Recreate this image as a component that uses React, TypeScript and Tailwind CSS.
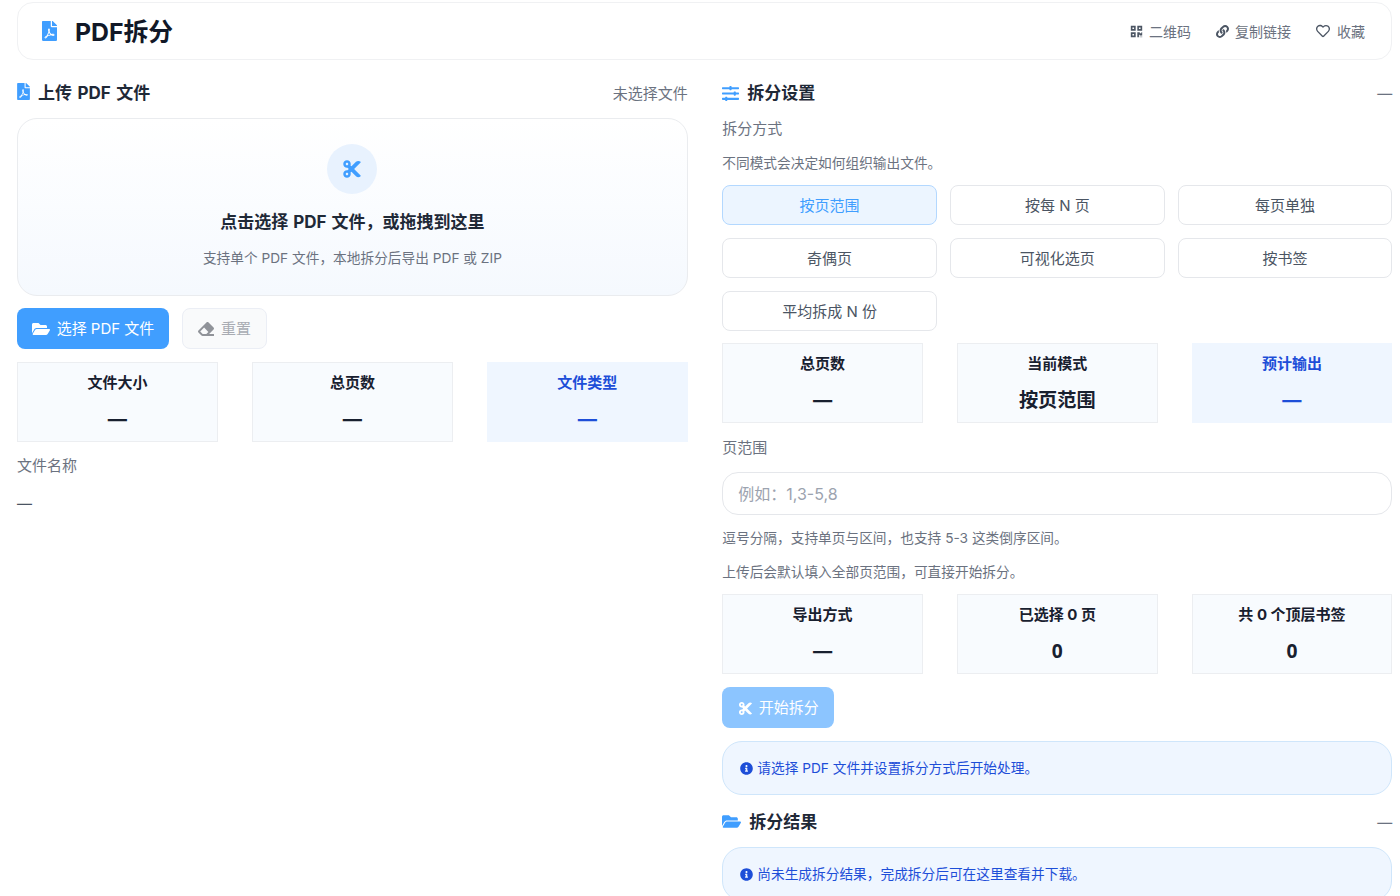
import { FaCut, FaEraser, FaFilePdf, FaFolderOpen, FaInfoCircle, FaLink, FaQrcode, FaRegHeart, FaSlidersH } from 'react-icons/fa';

const MODES = ['按页范围', '按每 N 页', '每页单独', '奇偶页', '可视化选页', '按书签', '平均拆成 N 份'];

function Stat({ label, value, active }: { label: string; value: string; active?: boolean }) {
  return (
    <div className={`h-[80px] border pt-[8px] text-center ${active ? 'border-[#eff6ff] bg-[#eff6ff] text-[#1d4ed8]' : 'border-[#eceef1] bg-[#f8fbfe] text-[#18202f]'}`}>
      <div className="text-[15px] font-bold leading-[24px]">{label}</div>
      <div className={`mt-[9px] text-[19.2px] font-bold leading-[30px] ${value === '0' ? "font-['Noto_Sans']" : ''}`}>{value}</div>
    </div>
  );
}

function SectionTitle({ icon, title, right }: { icon: React.ReactNode; title: string; right: string }) {
  return (
    <div className="flex h-[26px] items-center justify-between">
      <div className="flex items-center text-[17px] font-bold text-[#1f2937] [word-spacing:1.5px]">
        {icon}
        {title}
      </div>
      <span className="text-[15px] text-[#6b7280]">{right}</span>
    </div>
  );
}

function Notice({ text, className }: { text: string; className: string }) {
  return (
    <div className={`flex items-center rounded-[20px] border border-[#cfe6fb] bg-[#eff6ff] px-[17px] text-[13.7px] text-[#1d4ed8] ${className}`}>
      <FaInfoCircle className="mr-[4px] text-[13px] text-[#1d4ed8]" />
      {text}
    </div>
  );
}

export default function App() {
  return (
    <div className="h-[896px] overflow-hidden bg-white pl-[17px] pr-[8px] pt-[2px] font-['Inter','Noto_Sans_CJK_SC',sans-serif]">
      <header className="flex h-[58px] items-center justify-between rounded-[16px] border border-[#f0f1f3] pl-[24px] pr-[26px]">
        <div className="flex items-center">
          <FaFilePdf className="mr-[18px] h-[20px] w-[15px] text-[#409eff]" />
          <h1 className="mt-[4px] text-[24.8px] font-bold text-[#111827]">PDF拆分</h1>
        </div>
        <div className="flex items-center gap-[25px] text-[14px] text-[#6b7280]">
          <span className="flex items-center gap-[6px]"><FaQrcode className="text-[13px] text-[#4b5563]" />二维码</span>
          <span className="flex items-center gap-[6px]"><FaLink className="text-[13px] text-[#4b5563]" />复制链接</span>
          <span className="flex items-center gap-[7px]"><FaRegHeart className="text-[14px] text-[#4b5563]" />收藏</span>
        </div>
      </header>

      <div className="grid grid-cols-[670.8px_670px] gap-x-[34.5px] pt-[21px]">
        <section>
          <SectionTitle icon={<FaFilePdf className="mb-[6px] mr-[8px] h-[17px] w-[13px] text-[#409eff]" />} title="上传 PDF 文件" right="未选择文件" />
          <div className="mt-[11px] flex h-[178px] flex-col items-center rounded-[20px] border border-[#eaecef] bg-gradient-to-b from-white to-[#f5f9fe] pt-[25px]">
            <div className="flex h-[50px] w-[50px] items-center justify-center rounded-full bg-[#e8f2fe]">
              <FaCut className="text-[20px] text-[#409eff]" />
            </div>
            <div className="mt-[15px] text-[17px] font-bold leading-[26px] text-[#1f2937] [word-spacing:1px]">点击选择 PDF 文件，或拖拽到这里</div>
            <div className="mt-[12px] text-[13.7px] leading-[22px] text-[#6b7280]">支持单个 PDF 文件，本地拆分后导出 PDF 或 ZIP</div>
          </div>
          <div className="mt-[12px] flex gap-[13px]">
            <button className="flex h-[41px] w-[152px] items-center justify-center gap-[7px] rounded-[8px] bg-[#409eff] pt-[1px] text-[15px] text-white">
              <FaFolderOpen className="text-[18px]" />选择 PDF 文件
            </button>
            <button className="flex h-[41px] w-[85px] items-center justify-center gap-[7px] rounded-[8px] border border-[#ebeef5] bg-[#f9fafb] pt-[1px] text-[15px] text-[#a8abb2]">
              <FaEraser className="text-[16px] text-[#909399]" />重置
            </button>
          </div>
          <div className="mt-[13px] grid grid-cols-3 gap-x-[34px]">
            <Stat label="文件大小" value="—" />
            <Stat label="总页数" value="—" />
            <Stat label="文件类型" value="—" active />
          </div>
          <div className="mt-[12px] text-[15px] leading-[24px] text-[#6b7280]">文件名称</div>
          <div className="mt-[13px] text-[15px] leading-[26px] text-[#4b5563]">—</div>
        </section>

        <section>
          <SectionTitle icon={<FaSlidersH className="mb-[2px] mr-[8px] text-[17px] text-[#409eff]" />} title="拆分设置" right="—" />
          <div className="mt-[10px] text-[15px] leading-[24px] text-[#6b7280]">拆分方式</div>
          <div className="mt-[11px] text-[13.7px] leading-[22px] text-[#6b7280]">不同模式会决定如何组织输出文件。</div>
          <div className="mt-[11px] grid grid-cols-3 gap-x-[13px] gap-y-[13px]">
            {MODES.map((mode, i) => (
              <button
                key={mode}
                className={`h-[40px] rounded-[8px] border pt-[2px] text-[15px] ${i === 0 ? 'border-[#b3d8ff] bg-[#ecf5ff] text-[#409eff]' : 'border-[#e5e7eb] bg-white text-[#4b5563]'}`}
              >
                {mode}
              </button>
            ))}
          </div>
          <div className="mt-[12px] grid grid-cols-3 gap-x-[34px]">
            <Stat label="总页数" value="—" />
            <Stat label="当前模式" value="按页范围" />
            <Stat label="预计输出" value="—" active />
          </div>
          <div className="mt-[13px] text-[15px] leading-[24px] text-[#6b7280]">页范围</div>
          <input
            placeholder="例如：1,3-5,8"
            className="mt-[12px] block h-[43px] w-full rounded-[16px] border border-[#e5e7eb] bg-white px-[15px] text-[16px] outline-none placeholder:text-[#9ca3af]"
          />
          <div className="mt-[12px] text-[13.7px] leading-[22px] text-[#6b7280]">逗号分隔，支持单页与区间，也支持 5-3 这类倒序区间。</div>
          <div className="mt-[12px] text-[13.7px] leading-[22px] text-[#6b7280]">上传后会默认填入全部页范围，可直接开始拆分。</div>
          <div className="mt-[11px] grid grid-cols-3 gap-x-[34px]">
            <Stat label="导出方式" value="—" />
            <Stat label="已选择 0 页" value="0" />
            <Stat label="共 0 个顶层书签" value="0" />
          </div>
          <button className="mt-[13px] flex h-[41px] w-[112px] items-center justify-center gap-[6px] rounded-[8px] bg-[#8cc5ff] pt-[1px] text-[15px] text-white">
            <FaCut className="text-[15px]" />开始拆分
          </button>
          <Notice text="请选择 PDF 文件并设置拆分方式后开始处理。" className="mt-[13px] h-[54px]" />
          <div className="mt-[15px]">
            <SectionTitle icon={<FaFolderOpen className="mb-[3px] mr-[8px] text-[19px] text-[#409eff]" />} title="拆分结果" right="—" />
          </div>
          <Notice text="尚未生成拆分结果，完成拆分后可在这里查看并下载。" className="mt-[11px] h-[54px]" />
        </section>
      </div>
    </div>
  );
}
